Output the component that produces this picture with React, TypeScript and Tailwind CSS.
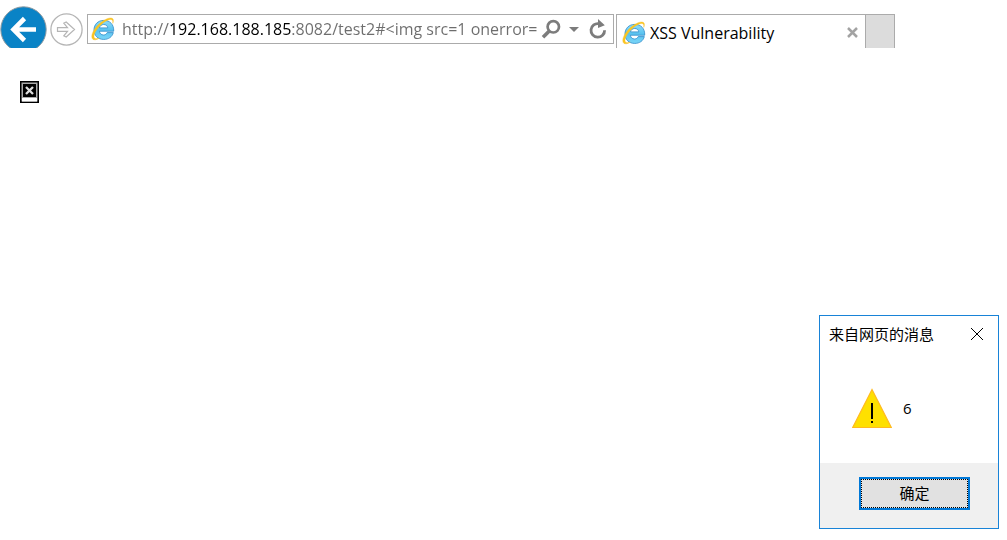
import { useState } from "react";

function ExplorerLogo() {
  return (
    <svg viewBox="0 0 24 24" className="size-6 shrink-0" aria-hidden="true">
      <defs>
        <linearGradient id="logo-blue" x1="0" y1="0" x2="0" y2="1">
          <stop offset="0" stopColor="#8fdcf9" />
          <stop offset="0.5" stopColor="#58c2ef" />
          <stop offset="1" stopColor="#7bd6f8" />
        </linearGradient>
      </defs>
      <path
        d="M22.3 15.6H16.2C15.4 17.2 14.2 18 12.6 18C10.2 18 8.6 16.5 8.4 14.2H22.7C23 7.6 19 3.4 12.9 3.4C6.9 3.4 3 7.4 3 13C3 18.7 7 22.4 12.7 22.4C17.6 22.4 21.2 19.9 22.3 15.6ZM8.5 10.9C8.9 8.8 10.4 7.5 12.7 7.5C15 7.5 16.5 8.8 16.8 10.9Z"
        fill="url(#logo-blue)"
        stroke="#3a94cf"
        strokeWidth=".9"
        strokeLinejoin="round"
      />
      <path
        d="M21.8 6.4C23 3.2 22.4 1.2 20 1C16 .7 8.500 5.300 4.200 11.200C.9 15.700-.2 20.400 1.800 22.200C3.100 23.400 5.600 22.800 8.200 21.200C5.800 21.900 4 21.900 3.300 20.800C2.200 19 3.900 15 7 11.100C10.900 6.200 16.600 2.300 19.700 2.500C21.600 2.600 22.100 4 21.800 6.400Z"
        fill="#fcc61f"
        stroke="#f6bd2a"
        strokeWidth=".4"
      />
    </svg>
  );
}

function AddressBar() {
  const [address, setAddress] = useState(
    "http://192.168.188.185:8082/test2#<img src=1 onerror=",
  );
  return (
    <form
      onSubmit={(event) => event.preventDefault()}
      className="ml-1 mt-3.5 flex h-[30px] min-w-0 flex-[522] items-center border border-[#ababab] bg-white pl-[3px]"
    >
      <ExplorerLogo />
      <input
        type="text"
        aria-label="Address"
        spellCheck={false}
        value={address}
        onChange={(event) => setAddress(event.target.value)}
        className="ml-[7px] h-7 min-w-0 flex-1 bg-[linear-gradient(90deg,#6d6d6d_47px,#000_47px,#000_170px,#6d6d6d_170px)] bg-clip-text text-base text-transparent caret-black outline-none"
      />
      <button type="submit" aria-label="Search" className="ml-[3px] shrink-0">
        <svg viewBox="0 0 20 20" className="size-5" fill="none" stroke="#7c7c7c">
          <circle cx="12.300" cy="7.800" r="5.700" strokeWidth="2.700" />
          <path d="M8.300 12L2 18.300" strokeWidth="3.600" />
        </svg>
      </button>
      <button type="button" aria-label="Show address history" className="ml-2 shrink-0">
        <svg viewBox="0 0 10 5" className="h-[5px] w-2.5" fill="#7c7c7c">
          <path d="M0 0H10L5 5Z" />
        </svg>
      </button>
      <button type="button" aria-label="Refresh" className="ml-[9px] mr-[5px] shrink-0">
        <svg viewBox="0 0 20 20" className="size-5" fill="none">
          <path d="M16.600 11.200A6.800 6.800 0 1 1 11 4.700" stroke="#7c7c7c" strokeWidth="2.800" />
          <path d="M10 0L16.800 6.300L10 9Z" fill="#7c7c7c" />
        </svg>
      </button>
    </form>
  );
}

function Toolbar() {
  return (
    <header className="flex h-12 items-start overflow-hidden pr-28">
      <button type="button" aria-label="Back" className="mt-1.5 shrink-0">
        <svg viewBox="0 0 47 47" className="size-[47px]" fill="none">
          <circle cx="23.500" cy="23.500" r="22.700" fill="#0a83c6" stroke="#8e9aa1" />
          <path d="M36 23.500H14M24.500 12.500L13.500 23.500L24.500 34.500" stroke="#fff" strokeWidth="4.600" />
        </svg>
      </button>
      <button type="button" aria-label="Forward" className="ml-[3px] mt-[13px] shrink-0">
        <svg viewBox="0 0 33 33" className="size-[33px]" fill="none" stroke="#b5b5b5">
          <circle cx="16.500" cy="16.500" r="15.600" strokeWidth="1.300" />
          <path
            d="M7.500 14.700H17.500L13.800 10.200L16.200 9L24.500 16.500L16.200 24L13.800 22.800L17.500 18.300H7.500Z"
            strokeWidth="1.200"
          />
        </svg>
      </button>
      <AddressBar />
      <div className="ml-0.5 mt-3.5 flex h-[34px] min-w-0 flex-[236] items-center border border-b-0 border-[#ababab] bg-white pl-[5px] pr-[7px] pt-0.5">
        <ExplorerLogo />
        <span className="ml-1 min-w-0 flex-1 truncate text-base">XSS Vulnerability</span>
        <button type="button" aria-label="Close tab" className="shrink-0">
          <svg viewBox="0 0 11 11" className="size-[11px]" stroke="#a3a3a3" strokeWidth="2.500">
            <path d="M1 1L10 10M10 1L1 10" />
          </svg>
        </button>
      </div>
      <button
        type="button"
        aria-label="New tab"
        className="mt-3.5 h-[34px] w-[29px] shrink-0 border border-b-0 border-l-0 border-[#ababab] bg-[#dcdcdc]"
      />
    </header>
  );
}

function BrokenImage() {
  return (
    <svg viewBox="0 0 19 22" className="h-[22px] w-[19px]" role="img" aria-label="Broken image">
      <path d="M0 0H19V22H0Z" fill="#000" />
      <path d="M1.500 1.500H17.500V20.500H1.500Z" fill="#aaa" />
      <path d="M3 3H16V16H3Z" fill="#000" />
      <path d="M2 17H17V20.500H2Z" fill="#fff" />
      <path d="M6 6L13 13M13 6L6 13" stroke="#ddd" strokeWidth="2.300" />
    </svg>
  );
}

function MessageDialog({ onClose }: { onClose: () => void }) {
  return (
    <section
      role="alertdialog"
      aria-labelledby="message-title"
      aria-describedby="message-text"
      className="fixed bottom-[11px] right-2 flex w-[180px] flex-col border border-[#1883d7] bg-white"
    >
      <div className="flex h-9 items-center justify-between pl-[9px] pr-[15px]">
        <h1 id="message-title" className="text-[15px]">来自网页的消息</h1>
        <button type="button" aria-label="Close" onClick={onClose}>
          <svg viewBox="0 0 12 12" className="size-3" stroke="#000">
            <path d="M0 0L12 12M12 0L0 12" />
          </svg>
        </button>
      </div>
      <div className="flex items-center gap-[11px] pb-[34px] pl-8 pt-9">
        <svg viewBox="0 0 40 41" className="h-[41px] w-10 shrink-0" aria-hidden="true">
          <path d="M20 1.500L39.300 39.500H.7Z" fill="#fee000" stroke="#ffba20" strokeWidth="1.200" />
          <path d="M19 15H21V31H19ZM19 33H21V35H19Z" fill="#000" />
        </svg>
        <p id="message-text" className="text-[15px]">6</p>
      </div>
      <div className="flex justify-end bg-[#f0f0f0] pb-[18px] pr-7 pt-3.5">
        <button
          type="button"
          onClick={onClose}
          className="h-[33px] w-[111px] border-2 border-[#0078d7] bg-[#e1e1e1] text-[15px] outline-1 -outline-offset-3 outline-dotted outline-black"
        >
          确定
        </button>
      </div>
    </section>
  );
}

export default function App() {
  const [open, setOpen] = useState(true);
  return (
    <div className="min-h-screen bg-white font-['Open_Sans','Noto_Sans_CJK_SC',sans-serif] text-black">
      <Toolbar />
      <main className="px-5 pt-[33px]">
        <BrokenImage />
      </main>
      {open && <MessageDialog onClose={() => setOpen(false)} />}
    </div>
  );
}
